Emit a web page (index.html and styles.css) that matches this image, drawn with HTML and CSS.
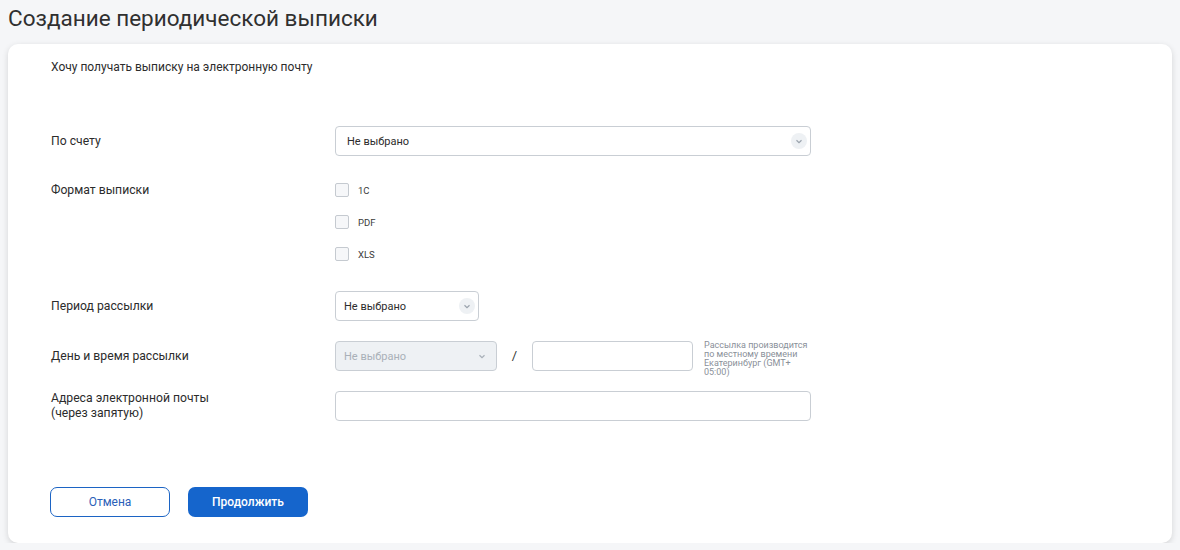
FILE: index.html
```html
<!DOCTYPE html>
<html lang="ru">
  <head>
    <meta charset="UTF-8" />
    <title>Создание периодической выписки</title>
    <link rel="stylesheet" href="styles.css">
  </head>
  <body>
    <h1 class="page-title">Создание периодической выписки</h1>

    <div class="card">
      <p class="intro">Хочу получать выписку на электронную почту</p>

      <div class="row row-account">
        <div class="label">По счету</div>
        <div class="select select-wide">
          <span>Не выбрано</span>
          <span class="chevron"><svg width="8" height="5" viewBox="0 0 8 5"><path d="M1.5 1.2 L4 3.6 L6.5 1.2" fill="none" stroke="#9aa3ad" stroke-width="1.2"/></svg></span>
        </div>
      </div>

      <div class="row row-format">
        <div class="label">Формат выписки</div>
        <div class="checks">
          <label class="check"><span class="box"></span>1С</label>
          <label class="check"><span class="box"></span>PDF</label>
          <label class="check"><span class="box"></span>XLS</label>
        </div>
      </div>

      <div class="row row-period">
        <div class="label">Период рассылки</div>
        <div class="select select-period">
          <span>Не выбрано</span>
          <span class="chevron"><svg width="8" height="5" viewBox="0 0 8 5"><path d="M1.5 1.2 L4 3.6 L6.5 1.2" fill="none" stroke="#9aa3ad" stroke-width="1.2"/></svg></span>
        </div>
      </div>

      <div class="row row-day">
        <div class="label">День и время рассылки</div>
        <div class="select select-day disabled">
          <span>Не выбрано</span>
          <span class="chevron plain"><svg width="8" height="5" viewBox="0 0 8 5"><path d="M1.5 1.2 L4 3.6 L6.5 1.2" fill="none" stroke="#a8b0b8" stroke-width="1.2"/></svg></span>
        </div>
        <span class="slash">/</span>
        <div class="input input-time"></div>
        <div class="note">Рассылка производится по местному времени Екатеринбург (GMT+ 05:00)</div>
      </div>

      <div class="row row-email">
        <div class="label">Адреса электронной почты<br>(через запятую)</div>
        <div class="input input-wide"></div>
      </div>

      <div class="actions">
        <button class="btn btn-outline">Отмена</button>
        <button class="btn btn-primary">Продолжить</button>
      </div>
    </div>
  </body>
</html>
```

FILE: styles.css
```css
* {
  margin: 0;
  padding: 0;
  box-sizing: border-box;
}

body {
  background: #f5f6f8;
  font-family: Roboto, "Noto Sans", sans-serif;
  color: #2c2c2c;
  padding: 5px 8px 0 8px;
}

.page-title {
  font-size: 22.5px;
  font-weight: 400;
  line-height: 26px;
  color: #303030;
  margin-bottom: 13px;
}

.card {
  background: #fff;
  border-radius: 10px;
  box-shadow: 0 2px 6px rgba(0, 0, 0, 0.14);
  padding: 16px 43px 26px 43px;
  height: 499px;
}

.intro {
  font-size: 12px;
  line-height: 14px;
  margin-bottom: 52px;
}

.row {
  display: flex;
  align-items: center;
}

.label {
  width: 284px;
  flex-shrink: 0;
  font-size: 12.2px;
  line-height: 15px;
}

.row-format {
  align-items: flex-start;
  margin-top: 27px;
}

.row-format .label {
  margin-top: 0;
}

.row-period {
  margin-top: 30px;
}

.row-day {
  margin-top: 20px;
  align-items: flex-start;
}

.row-day .label,
.row-day .slash {
  line-height: 30px;
}

.row-email {
  margin-top: 14px;
  align-items: flex-start;
}

.select,
.input {
  height: 30px;
  border: 1px solid #c9ced4;
  border-radius: 4px;
  background: #fff;
}

.select {
  display: flex;
  align-items: center;
  justify-content: space-between;
  font-size: 11px;
  padding: 0 3px 0 11px;
}

.select-wide {
  width: 476px;
}

.select-period {
  width: 144px;
  padding-left: 8px;
}

.select-day {
  width: 162px;
  padding-left: 8px;
  padding-right: 6px;
}

.select.disabled {
  background: #eef1f4;
  color: #a9b0b8;
}

.chevron {
  width: 16px;
  height: 16px;
  border-radius: 50%;
  background: #eef1f4;
  display: flex;
  align-items: center;
  justify-content: center;
}

.chevron.plain {
  background: none;
}

.checks {
  display: flex;
  flex-direction: column;
  gap: 18px;
}

.check {
  display: flex;
  align-items: center;
  height: 14px;
  font-size: 9.5px;
  color: #3a3a3a;
}

.box {
  width: 14px;
  height: 14px;
  border: 1px solid #c5cad0;
  border-radius: 2px;
  background: #f6f7f9;
  margin-right: 9px;
}

.slash {
  width: 35px;
  text-align: center;
  font-size: 13px;
  color: #333;
}

.input-time {
  width: 161px;
}

.note {
  width: 112px;
  margin-left: 11px;
  font-size: 9px;
  line-height: 9px;
  color: #8a9099;
}

.input-wide {
  width: 476px;
}

.actions {
  display: flex;
  gap: 18px;
  margin-top: 66px;
  margin-left: -1px;
}

.btn {
  width: 120px;
  height: 30px;
  border-radius: 7px;
  font-family: Roboto, "Noto Sans", sans-serif;
  font-size: 12px;
  cursor: pointer;
}

.btn-outline {
  background: #fff;
  border: 1px solid #1c64c4;
  color: #2a5fb8;
}

.btn-primary {
  background: #1565cc;
  border: none;
  color: #fff;
  font-weight: 500;
}
```
